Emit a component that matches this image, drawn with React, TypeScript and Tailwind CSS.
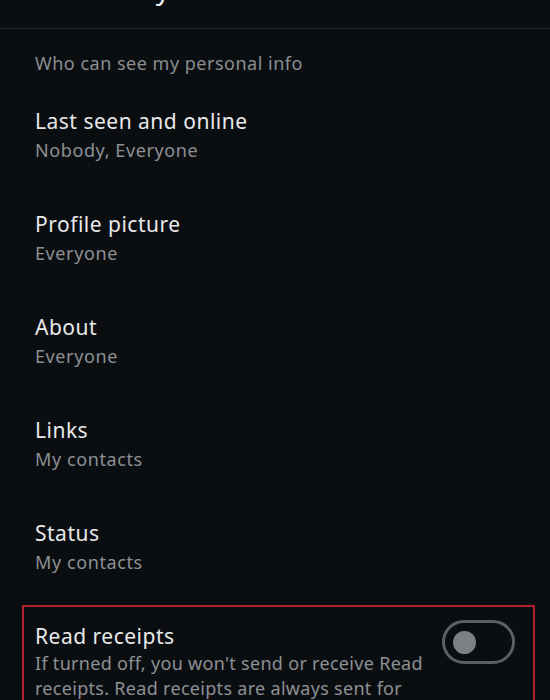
import React from "react";

const rows = [
  { title: "Last seen and online", sub: "Nobody, Everyone" },
  { title: "Profile picture", sub: "Everyone" },
  { title: "About", sub: "Everyone" },
  { title: "Links", sub: "My contacts" },
  { title: "Status", sub: "My contacts" },
];

export default function App() {
  return (
    <div
      className="w-[550px] h-[700px] overflow-hidden bg-[#0b0e11] text-[#e8e9ea]"
      style={{ fontFamily: '"Noto Sans", Roboto, sans-serif' }}
    >
      <div className="h-[29px] border-b border-[#20242a] overflow-hidden">
        <div className="flex items-center h-[40px] -mt-[32px]">
          <svg width="22" height="22" viewBox="0 0 24 24" className="ml-[29px]" fill="none" stroke="#e8e9ea" strokeWidth="2.2" strokeLinecap="round" strokeLinejoin="round">
            <path d="M20 12H4" />
            <path d="M11 5l-7 7 7 7" />
          </svg>
          <div className="ml-[22px] text-[28px] leading-[40px] tracking-[0.6px] text-[#f0f1f2]">Privacy</div>
        </div>
      </div>

      <div className="pt-[22px] pb-[8px] px-[35px] text-[18px] leading-[24px] tracking-[0.5px] text-[#8a8e93]">
        Who can see my personal info
      </div>

      {rows.map((r) => (
        <div key={r.title} className="px-[35px] pt-[23px] pb-[22px]">
          <div className="text-[21px] leading-[30px] tracking-[0.5px]">{r.title}</div>
          <div className="text-[18px] leading-[28px] tracking-[0.6px] text-[#8d9094]">{r.sub}</div>
        </div>
      ))}

      <div className="mt-[7px] ml-[22px] mr-[15px] border-2 border-[#b3222c] pl-[11px] pr-[18px] pt-[14px] flex gap-[8px]">
        <div className="flex-1">
          <div className="text-[21px] leading-[30px] tracking-[0.5px]">Read receipts</div>
          <div className="text-[18px] leading-[25px] tracking-[0.3px] text-[#8d9094]">
            If turned off, you won't send or receive Read receipts. Read receipts are always sent for group chats.
          </div>
        </div>
        <div className="w-[73px] h-[44px] rounded-full border-[3px] border-[#5c6065] flex items-center pl-[8px] shrink-0 mt-[-1px]">
          <div className="w-[23px] h-[23px] rounded-full bg-[#7c8085]" />
        </div>
      </div>
    </div>
  );
}
